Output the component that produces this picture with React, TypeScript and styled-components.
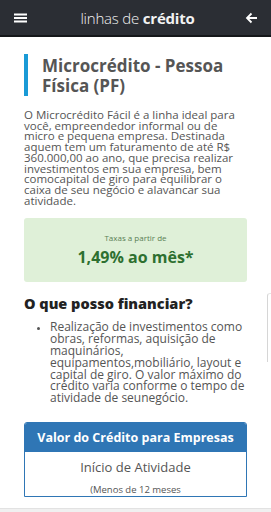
import React from 'react';
import styled, { createGlobalStyle } from 'styled-components';

const GlobalStyle = createGlobalStyle`
  html, body {
    margin: 0;
    padding: 0;
    background: #ffffff;
    font-family: "Open Sans", "Noto Sans", sans-serif;
    overflow: hidden;
  }
`;

const Screen = styled.div`
  position: relative;
  width: 271px;
  height: 512px;
  overflow: hidden;
  background: #fff;
`;

const TopBar = styled.header`
  height: 35px;
  display: flex;
  align-items: center;
  justify-content: space-between;
  padding: 0 12px;
  background: #2b2e34;
  border-bottom: 2px solid #15171a;
  color: #fff;
`;

const BarTitle = styled.h1`
  margin: 0 0 0 4px;
  font-size: 15px;
  font-weight: 300;
  color: #f2f2f2;
  letter-spacing: -0.2px;

  b {
    font-weight: 700;
  }
`;

const IconButton = styled.span`
  display: flex;
  width: 16px;
  height: 16px;
  align-items: center;
  justify-content: center;
`;

const Content = styled.main`
  padding: 17px 24px 0;
`;

const TitleBlock = styled.div`
  display: flex;
  gap: 14px;
  align-items: stretch;
`;

const TitleBar = styled.div`
  width: 4px;
  flex: 0 0 4px;
  background: #1a9ad6;
`;

const Title = styled.h2`
  margin: 2px 0 0;
  font-size: 17px;
  line-height: 20px;
  font-weight: 700;
  color: #555;
`;

const Paragraph = styled.p`
  margin: 14px 0 0;
  font-size: 11.5px;
  line-height: 10.7px;
  color: #555;
`;

const RateBox = styled.div`
  margin-top: 12px;
  height: 64px;
  border-radius: 3px;
  background: #dff0d8;
  display: flex;
  flex-direction: column;
  align-items: center;
  justify-content: center;
  gap: 3px;
`;

const RateLabel = styled.span`
  font-size: 8px;
  color: #5a7f55;
`;

const RateValue = styled.strong`
  font-size: 16px;
  color: #2e7030;
  font-weight: 700;
`;

const SectionTitle = styled.h3`
  margin: 12px 0 0;
  font-size: 14.5px;
  font-weight: 800;
  color: #222;
`;

const List = styled.ul`
  margin: 8px 0 0;
  padding-left: 26px;
  font-size: 12px;
  line-height: 11.8px;
  color: #555;

  li::marker {
    font-size: 9px;
  }
`;

const CreditTable = styled.div`
  margin-top: 18px;
  border: 1px solid #2f76b5;
  border-radius: 3px 3px 0 0;
  overflow: hidden;
`;

const TableHead = styled.div`
  height: 29px;
  display: flex;
  align-items: center;
  justify-content: center;
  background: #2f76b5;
  color: #fff;
  font-size: 12.5px;
  font-weight: 700;
`;

const TableRow = styled.div<{ $small?: boolean }>`
  text-align: center;
  color: #555;
  font-size: ${p => (p.$small ? '9.5px' : '13px')};
  padding-top: ${p => (p.$small ? '7px' : '6px')};
`;

const SideHandle = styled.div`
  position: absolute;
  right: 0;
  top: 293px;
  width: 3px;
  height: 68px;
  border-left: 1px solid #d6d6d6;
  border-top: 1px solid #e6e6e6;
  border-radius: 3px 0 0 0;
`;

const BottomEdge = styled.div`
  position: absolute;
  left: 0;
  right: 0;
  bottom: 0;
  height: 3px;
  background: #f0f0f0;
  border-top: 1px solid #e2e2e2;
`;

const App: React.FC = () => {
  return (
    <Screen>
      <GlobalStyle />
      <TopBar>
        <IconButton>
          <svg width="13" height="10" viewBox="0 0 13 10">
            <rect x="0" y="0.5" width="13" height="2" fill="#fff" />
            <rect x="0" y="4" width="13" height="2" fill="#fff" />
            <rect x="0" y="7.5" width="13" height="2" fill="#fff" />
          </svg>
        </IconButton>
        <BarTitle>
          linhas de <b>crédito</b>
        </BarTitle>
        <IconButton>
          <svg width="13" height="12" viewBox="0 0 13 12">
            <path d="M12 6H2M6.5 1.5L2 6l4.5 4.5" stroke="#fff" strokeWidth="1.8" fill="none" />
          </svg>
        </IconButton>
      </TopBar>

      <Content>
        <TitleBlock>
          <TitleBar />
          <Title>Microcrédito - Pessoa Física (PF)</Title>
        </TitleBlock>

        <Paragraph>
          O Microcrédito Fácil é a linha ideal para você, empreendedor informal ou de micro e
          pequena empresa. Destinada aquem tem um faturamento de até R$ 360.000,00 ao ano, que
          precisa realizar investimentos em sua empresa, bem comocapital de giro para equilibrar o
          caixa de seu negócio e alavancar sua atividade.
        </Paragraph>

        <RateBox>
          <RateLabel>Taxas a partir de</RateLabel>
          <RateValue>1,49% ao mês*</RateValue>
        </RateBox>

        <SectionTitle>O que posso financiar?</SectionTitle>

        <List>
          <li>
            Realização de investimentos como obras, reformas, aquisição de maquinários,
            equipamentos,mobiliário, layout e capital de giro. O valor máximo do crédito varia
            conforme o tempo de atividade de seunegócio.
          </li>
        </List>

        <CreditTable>
          <TableHead>Valor do Crédito para Empresas</TableHead>
          <TableRow>Início de Atividade</TableRow>
          <TableRow $small>(Menos de 12 meses</TableRow>
        </CreditTable>
      </Content>

      <SideHandle />
      <BottomEdge />
    </Screen>
  );
};

export default App;
